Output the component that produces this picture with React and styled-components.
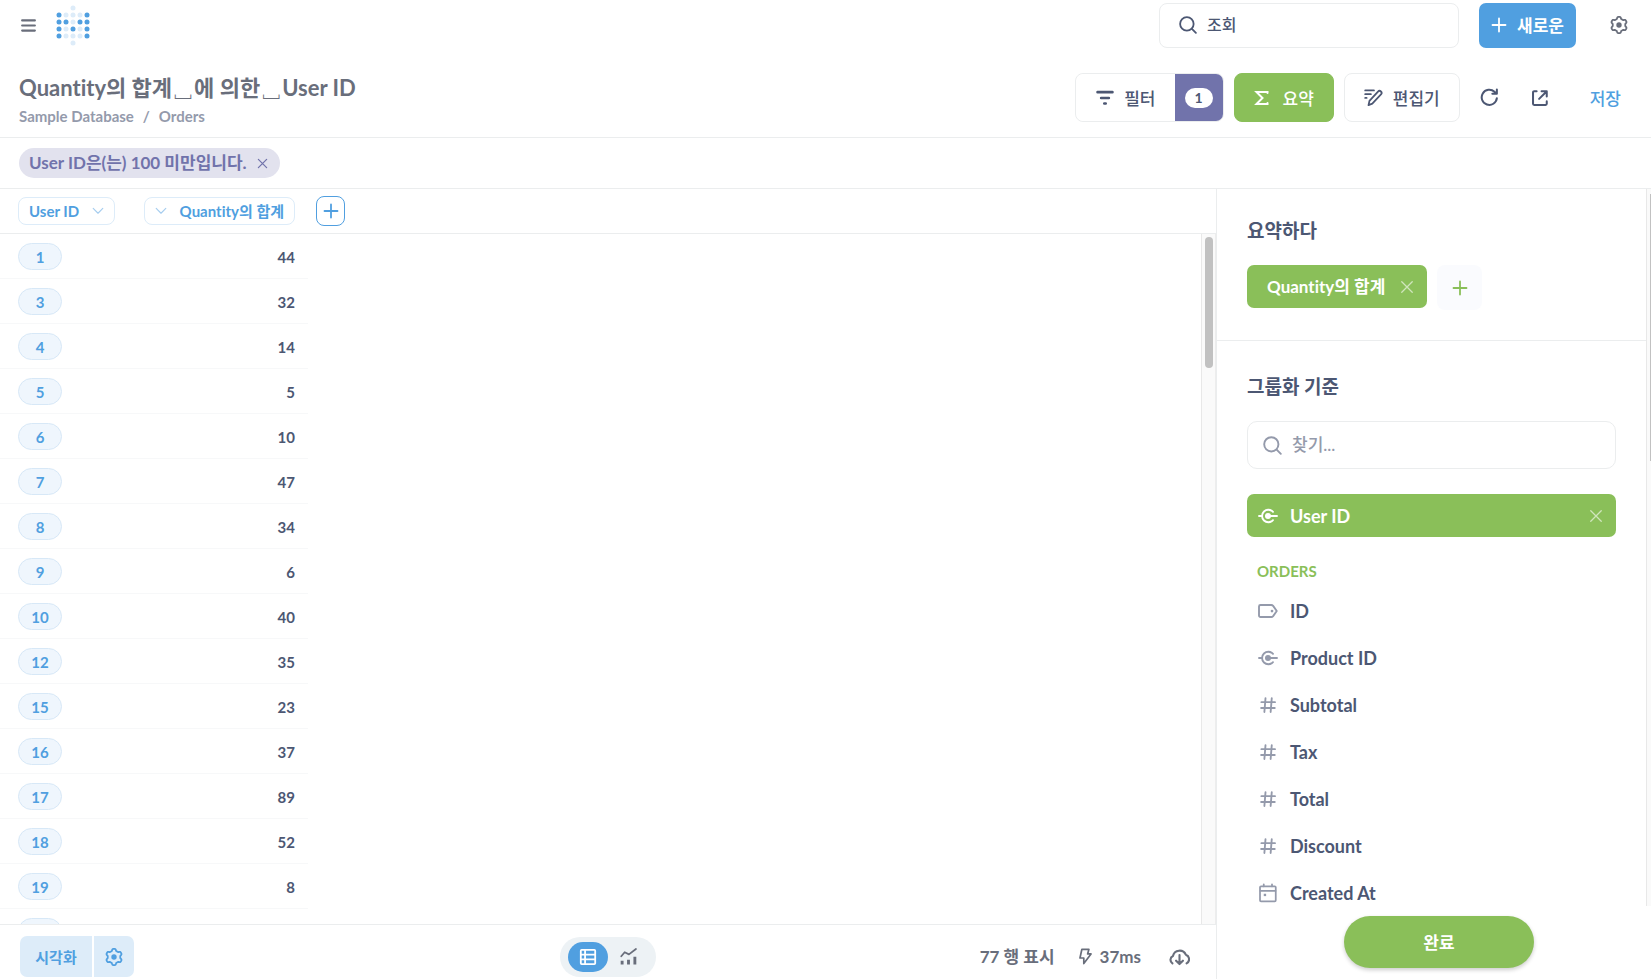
import React from "react";
import styled, { createGlobalStyle, ThemeProvider, css } from "styled-components";

const theme = {
  brand: "#509fe0",
  brandLight: "#ddecf9",
  summarize: "#8abf59",
  filter: "#7173ab",
  dark: "#4c5773",
  medium: "#696e7b",
  light: "#949aab",
  border: "#ebedee",
};

const GlobalStyle = createGlobalStyle`
  * { box-sizing: border-box; }
  body { margin: 0; font-variant-ligatures: none; }
  body, button, input {
    font-family: Lato, "Noto Sans CJK KR", sans-serif;
    font-weight: 700;
  }
  button {
    border: 0;
    margin: 0;
    padding: 0;
    background: none;
    color: inherit;
    font-variant-ligatures: none;
    cursor: pointer;
  }
  svg { display: block; flex: none; }
`;

/* ---------- icons ---------- */

const Line = ({ size = 18, width = 1.5, children }) => (
  <svg
    width={size}
    height={size}
    viewBox="0 0 16 16"
    fill="none"
    stroke="currentColor"
    strokeWidth={width}
    strokeLinecap="round"
    strokeLinejoin="round"
    aria-hidden="true"
  >
    {children}
  </svg>
);

const gearOutline = (() => {
  const points = [];
  for (let i = 0; i < 120; i += 1) {
    const a = (i / 120) * Math.PI * 2;
    const r = 6.4 - 0.85 * Math.tanh(2.2 * Math.cos(6 * a));
    points.push(`${(8 + r * Math.cos(a)).toFixed(2)} ${(8 + r * Math.sin(a)).toFixed(2)}`);
  }
  return `M${points.join("L")}Z`;
})();

const GearIcon = () => (
  <Line size={18} width={1.6}>
    <path d={gearOutline} />
    <circle cx="8" cy="8" r="2.4" fill="currentColor" stroke="none" />
  </Line>
);
const BurgerIcon = () => (
  <Line size={17} width={2}>
    <path d="M2 3.2h12M2 8h12M2 12.8h12" />
  </Line>
);
const SearchIcon = ({ size = 18 }) => (
  <Line size={size} width={1.6}>
    <circle cx="7" cy="7" r="6" />
    <path d="M11.5 11.5 15 15" />
  </Line>
);
const PlusIcon = ({ size = 16 }) => (
  <Line size={size} width={1.8}>
    <path d="M8 1.5v13M1.5 8h13" />
  </Line>
);
const CloseIcon = ({ size = 13, width = 1.5 }) => (
  <Line size={size} width={width}>
    <path d="m2 2 12 12M14 2 2 14" />
  </Line>
);
const ChevronIcon = () => (
  <Line size={12} width={1.5}>
    <path d="m1.6 4.6 6.4 6.4 6.4-6.4" />
  </Line>
);
const FilterIcon = () => (
  <Line size={18} width={2.4}>
    <path d="M1.4 2.8h13.2M4.6 8h6.8M7.4 12.9h1.2" />
  </Line>
);
const SumIcon = () => (
  <Line size={16} width={2}>
    <path d="M13.5 3V2H2.5l6 6-6 6h11v-1" strokeLinejoin="miter" />
  </Line>
);
const NotebookIcon = () => (
  <Line size={19} width={1.5}>
    <path d="M1 2h7.4M1 5.2h4.8M1 8.4h1.2" />
    <path d="m4.6 10.8 7.2-7.8a1.7 1.7 0 0 1 2.5 2.4L7 13.2l-3.2 1.2Z" />
  </Line>
);
const RefreshIcon = () => (
  <Line size={19} width={1.7}>
    <path d="M14.2 8.6a6.4 6.4 0 1 1-2-5.4l1.6 1.4M14.2 1.2v3.6h-3.8" />
  </Line>
);
const ShareIcon = () => (
  <Line size={18} width={1.8}>
    <path d="M5 2H2.8a1 1 0 0 0-1 1v10.2a1 1 0 0 0 1 1H13a1 1 0 0 0 1-1V11M9.4 2H14v4.6M13.6 2.4 7.2 8.8" />
  </Line>
);
const TableIcon = () => (
  <Line size={18} width={1.6}>
    <rect x="1.6" y="1.6" width="12.8" height="12.8" rx="0.8" />
    <path d="M2 5.9h12M2 10.1h12M5.4 2v12" />
  </Line>
);
const ChartIcon = () => (
  <Line size={17} width={1.7}>
    <path d="m1.2 7.8 3.2-3.8 4 2L15 1" />
    <path
      d="M2 15.600v-3.600M8 15.600v-4.600M14 15.600V8.200"
      strokeWidth="2.7"
      strokeLinecap="butt"
    />
  </Line>
);
const BoltIcon = () => (
  <Line size={17} width={1.6}>
    <path d="M4.6 1.2h6.6L10 5.6h3.2L6.4 14.6V9.4H2.8Z" />
  </Line>
);
const CloudIcon = () => (
  <Line size={21} width={1.6}>
    <path d="M2.6 13.2A3.2 3.2 0 0 1 3 7.6 5.2 5.2 0 0 1 12.8 6.6a3.6 3.6 0 0 1 .6 6.6M8 6.8v6.8M5.4 11.2 8 13.8l2.6-2.6" />
  </Line>
);
const KeyFieldIcon = () => (
  <Line size={20} width={1.5}>
    <path d="M.8 8h2.6M8 8h7.2" />
    <path d="M12 4.7a5 5 0 1 0 0 6.6" />
    <circle cx="8" cy="8" r="2.4" fill="currentColor" stroke="none" />
  </Line>
);
const LabelIcon = () => (
  <Line size={20} width={1.5}>
    <path d="M2 3.2h8.6a2 2 0 0 1 1.5.7L15 8l-2.9 4.1a2 2 0 0 1-1.5.7H2A1.2 1.2 0 0 1 .8 11.6V4.4A1.2 1.2 0 0 1 2 3.2Z" />
    <circle cx="11.2" cy="8" r="1.1" fill="currentColor" stroke="none" />
  </Line>
);
const HashIcon = () => (
  <Line size={20} width={1.5}>
    <path d="M6 2.6 5.1 13.6M11 2.6l-.9 11M2.7 5.7h10.9M2.5 10.4h10.9" />
  </Line>
);
const CalendarIcon = () => (
  <Line size={20} width={1.4}>
    <rect x="1.6" y="2.6" width="12.6" height="12" rx="0.8" />
    <path d="M2 6.2h12M4.6 1v1.6M11.2 1v1.6" />
    <rect x="4.6" y="8.6" width="1.9" height="1.9" fill="currentColor" stroke="none" />
  </Line>
);

const logoRows = ["..o..", "xooox", "xxoxx", "xoxox", "xooox", "..o.."];
const Logo = () => (
  <svg width="34" height="41" viewBox="0 0 34 41" role="img" aria-label="Metabase">
    {logoRows.flatMap((row, y) =>
      [...row].map((dot, x) =>
        dot === "." ? null : (
          <circle
            key={`${x}-${y}`}
            cx={3 + x * 7}
            cy={3 + y * 7}
            r="2.5"
            fill={dot === "x" ? theme.brand : theme.brandLight}
          />
        )
      )
    )}
  </svg>
);

/* ---------- page and header ---------- */

const Page = styled.div`
  display: flex;
  flex-direction: column;
  height: 100vh;
  overflow: hidden;
  background: #fff;
  color: ${(p) => p.theme.dark};
  font-size: 17px;
  line-height: 24px;
`;

const AppBar = styled.header`
  display: flex;
  align-items: center;
  height: 50px;
  padding: 0 23px 0 19px;
  color: ${(p) => p.theme.medium};
`;

const HomeLink = styled.a`
  margin: 0 auto 0 19px;
`;

const IconButton = styled.button`
  display: flex;
  align-items: center;
  justify-content: center;
  min-width: ${(p) => p.$width || 18}px;
`;

const SearchBox = styled.label`
  display: flex;
  align-items: center;
  gap: 10px;
  width: ${(p) => (p.$large ? "100%" : "300px")};
  height: ${(p) => (p.$large ? 48 : 45)}px;
  padding: 0 ${(p) => (p.$large ? 15 : 19)}px;
  border: 1px solid ${(p) => p.theme.border};
  border-radius: ${(p) => (p.$large ? 10 : 8)}px;
  color: ${(p) => (p.$large ? p.theme.light : p.theme.dark)};
`;

const SearchInput = styled.input`
  flex: 1;
  min-width: 0;
  padding: 0 0 2px;
  border: 0;
  outline: 0;
  background: none;
  font-size: ${(p) => p.$size}px;
  font-weight: 500;
  color: inherit;
  &::placeholder { color: inherit; opacity: 1; }
`;

const NewButton = styled.button`
  display: flex;
  align-items: center;
  gap: 10px;
  height: 45px;
  margin: 0 34px 0 20px;
  padding: 0 12px 1px;
  border-radius: 7px;
  background: ${(p) => p.theme.brand};
  color: #fff;
  font-size: 17px;
`;

const QuestionBar = styled.div`
  display: flex;
  align-items: center;
  justify-content: space-between;
  height: 88px;
  padding: 8px 30px 0 19px;
  border-bottom: 1px solid ${(p) => p.theme.border};
`;

const Title = styled.h1`
  margin: 5px 0 0;
  font-size: 22px;
  line-height: 32px;
  font-weight: 700;
  color: ${(p) => p.theme.medium};
`;

const Breadcrumbs = styled.nav`
  display: flex;
  gap: 9px;
  font-size: 15px;
  line-height: 24px;
  color: ${(p) => p.theme.light};
  a { color: inherit; text-decoration: none; }
`;

const Actions = styled.div`
  display: flex;
  align-items: center;
  gap: 10px;
`;

const ActionButton = styled.button`
  display: flex;
  align-items: center;
  gap: ${(p) => p.$gap || 10}px;
  height: 49px;
  padding: 0 19px;
  border: 1px solid ${(p) => (p.$filled ? p.theme.summarize : p.theme.border)};
  border-radius: 8px;
  background: ${(p) => (p.$filled ? p.theme.summarize : "#fff")};
  color: ${(p) => (p.$filled ? "#fff" : p.theme.dark)};
  font-size: 17px;
  font-weight: 500;
`;

const FilterGroup = styled.div`
  display: flex;
  height: 49px;
  border: 1px solid ${(p) => p.theme.border};
  border-radius: 8px;
  overflow: hidden;
  ${ActionButton} {
    height: 47px;
    padding-left: 20px;
    border: 0;
  }
`;

const FilterCount = styled.button`
  display: flex;
  align-items: center;
  justify-content: center;
  width: 48px;
  background: ${(p) => p.theme.filter};
  span {
    width: 28px;
    height: 20px;
    border-radius: 10px;
    background: #fff;
    font-size: 14px;
    line-height: 20px;
  }
`;

const SaveButton = styled.button`
  margin-left: 20px;
  color: ${(p) => p.theme.brand};
  font-size: 17px;
  font-weight: 500;
`;

const FilterBar = styled.div`
  display: flex;
  align-items: center;
  height: 51px;
  padding: 0 19px;
  border-bottom: 1px solid ${(p) => p.theme.border};
`;

const FilterPill = styled.span`
  display: flex;
  align-items: center;
  gap: 10px;
  height: 30px;
  padding: 0 11px 0 10px;
  border-radius: 15px;
  background: #e2e2ee;
  color: ${(p) => p.theme.filter};
  font-size: 17px;
`;

/* ---------- data table ---------- */

const Body = styled.div`
  display: flex;
  flex: 1;
  min-height: 0;
`;

const Results = styled.main`
  display: flex;
  flex-direction: column;
  flex: 1;
  min-width: 0;
`;

const TableArea = styled.div`
  position: relative;
  flex: 1;
  min-height: 0;
  overflow: hidden;
`;

const Table = styled.table`
  width: 100%;
  border-spacing: 0;
  table-layout: fixed;
  font-size: 15px;
  line-height: 20px;
  th, td {
    height: 45px;
    padding: 0;
    text-align: left;
  }
  th { border-bottom: 1px solid ${(p) => p.theme.border}; }
`;

const Col = styled.col`
  width: ${(p) => (p.$width ? `${p.$width}px` : "auto")};
`;

const Cell = styled.td`
  && {
    border-bottom: 1px solid #f7f8f9;
    vertical-align: top;
    ${(p) =>
      p.$numeric
        ? css`
            padding: 13px 13px 0 0;
            text-align: right;
          `
        : css`
            padding: 9px 0 0 18px;
          `}
  }
`;

const HeadCell = styled.th`
  && { padding-left: ${(p) => p.$indent}px; }
`;

const ColumnButton = styled.button`
  display: flex;
  align-items: center;
  justify-content: space-between;
  width: ${(p) => p.$width}px;
  height: 28px;
  padding: 0 10px;
  border: 1px solid ${(p) => p.theme.brandLight};
  border-radius: 8px;
  color: ${(p) => p.theme.brand};
  font-size: 15px;
  line-height: 20px;
  white-space: nowrap;
  svg { color: #a6cdef; }
`;

const AddColumn = styled.button`
  display: flex;
  align-items: center;
  justify-content: center;
  width: 29px;
  height: 30px;
  border: 1px solid ${(p) => p.theme.brand};
  border-radius: 8px;
  color: ${(p) => p.theme.brand};
`;

const IdPill = styled.a`
  display: block;
  width: 44px;
  height: 27px;
  border: 1px solid #d7e8f7;
  border-radius: 14px;
  background: #eff6fd;
  color: ${(p) => p.theme.brand};
  line-height: 27px;
  text-align: center;
  text-decoration: none;
`;

const Track = styled.div`
  position: absolute;
  top: 45px;
  right: 0;
  bottom: 0;
  width: 15px;
  padding: 3px 2px 3px 3px;
  border-left: 1px solid #e8e8e8;
  border-right: 1px solid #ededed;
  background: #fafafa;
`;

const Thumb = styled.div`
  height: ${(p) => p.$height}px;
  border-radius: 4px;
  background: #c1c1c1;
`;

const Footer = styled.footer`
  display: grid;
  grid-template-columns: 1fr auto 1fr;
  align-items: center;
  height: 55px;
  padding: 9px 20px 0;
  border-top: 1px solid ${(p) => p.theme.border};
  color: ${(p) => p.theme.medium};
`;

const VisualizeGroup = styled.div`
  display: flex;
  gap: 2px;
  border-radius: 7px;
  overflow: hidden;
  width: max-content;
  button {
    display: flex;
    align-items: center;
    justify-content: center;
    height: 41px;
    background: ${(p) => p.theme.brandLight};
    color: ${(p) => p.theme.brand};
    font-size: 15px;
  }
`;

const VisualizeButton = styled.button`
  width: ${(p) => p.$width}px;
`;

const Toggle = styled.div`
  display: flex;
  align-items: center;
  height: 40px;
  padding: 0 8px;
  border-radius: 20px;
  background: #edf2f5;
`;

const ToggleButton = styled.button`
  display: flex;
  align-items: center;
  justify-content: center;
  width: 40px;
  height: 30px;
  border-radius: 15px;
  ${(p) =>
    p.$active &&
    css`
      background: ${p.theme.brand};
      color: #fff;
    `}
`;

const Stats = styled.div`
  display: flex;
  align-items: center;
  justify-content: flex-end;
  gap: 22px;
  padding-right: 6px;
  span { display: flex; align-items: center; gap: 6px; }
  button { padding-left: 6px; }
`;

/* ---------- summarize sidebar ---------- */

const Sidebar = styled.aside`
  display: flex;
  flex-direction: column;
  width: 435px;
  border-left: 1px solid ${(p) => p.theme.border};
`;

const Scroller = styled.div`
  display: flex;
  flex: 1;
  min-height: 0;
  overflow: hidden;
`;

const Sections = styled.div`
  flex: 1;
  min-width: 0;
`;

const SideTrack = styled.div`
  width: 5px;
  padding: 5px 0 0 3px;
  border-left: 1px solid #e8e8e8;
  background: #fafafa;
  ${Thumb} { border-radius: 0; }
`;

const Section = styled.section`
  padding: 28px 30px 30px;
  & + & {
    padding-top: 32px;
    border-top: 1px solid ${(p) => p.theme.border};
  }
`;

const SectionTitle = styled.h2`
  margin: 0 0 20px;
  font-size: 19px;
  line-height: 28px;
`;

const Chips = styled.div`
  display: flex;
  gap: 10px;
`;

const Chip = styled.div`
  display: flex;
  align-items: center;
  justify-content: space-between;
  gap: 15px;
  height: 43px;
  padding: 0 13px 0 ${(p) => (p.$wide ? 11 : 20)}px;
  border-radius: 7px;
  background: ${(p) => p.theme.summarize};
  color: #fff;
  font-size: ${(p) => (p.$wide ? 18 : 17)}px;
  margin-top: ${(p) => (p.$wide ? 25 : 0)}px;
  button { opacity: 0.6; }
`;

const AddChip = styled.button`
  display: flex;
  align-items: center;
  justify-content: center;
  width: 45px;
  height: 45px;
  border-radius: 8px;
  background: #fafbfe;
  color: ${(p) => p.theme.summarize};
`;

const Field = styled.span`
  display: flex;
  align-items: center;
  gap: 12px;
`;

const GroupName = styled.h3`
  margin: 24px 10px 6px;
  color: ${(p) => p.theme.summarize};
  font-size: 15px;
  line-height: 20px;
`;

const FieldList = styled.ul`
  margin: 0;
  padding: 0;
  list-style: none;
`;

const FieldButton = styled.button`
  display: flex;
  align-items: center;
  width: 100%;
  height: 47px;
  gap: 12px;
  padding-left: 11px;
  font-size: 18px;
  line-height: 22px;
  svg { color: ${(p) => p.theme.light}; }
`;

const SidebarFooter = styled.div`
  display: flex;
  justify-content: center;
  padding: 10px 0 11px 10px;
`;

const DoneButton = styled.button`
  width: 190px;
  height: 52px;
  padding-bottom: 2px;
  border-radius: 26px;
  background: ${(p) => p.theme.summarize};
  box-shadow: 0 2px 4px rgba(0, 0, 0, 0.2);
  color: #fff;
  font-size: 17px;
`;

const rows = [
  [1, 44], [3, 32], [4, 14], [5, 5], [6, 10], [7, 47], [8, 34], [9, 6],
  [10, 40], [12, 35], [15, 23], [16, 37], [17, 89], [18, 52], [19, 8], ["", ""],
];

const fields = [
  ["ID", LabelIcon],
  ["Product ID", KeyFieldIcon],
  ["Subtotal", HashIcon],
  ["Tax", HashIcon],
  ["Total", HashIcon],
  ["Discount", HashIcon],
  ["Created At", CalendarIcon],
];

export default function App() {
  return (
    <ThemeProvider theme={theme}>
      <GlobalStyle />
      <Page>
        <AppBar>
          <IconButton aria-label="메뉴"><BurgerIcon /></IconButton>
          <HomeLink href="#home"><Logo /></HomeLink>
          <SearchBox>
            <SearchIcon />
            <SearchInput $size={16} aria-label="조회" placeholder="조회" />
          </SearchBox>
          <NewButton><PlusIcon />새로운</NewButton>
          <IconButton aria-label="설정"><GearIcon /></IconButton>
        </AppBar>

        <QuestionBar>
          <div>
            <Title>Quantity의 합계␣에 의한␣User ID</Title>
            <Breadcrumbs>
              <a href="#database">Sample Database</a>
              <span>/</span>
              <a href="#orders">Orders</a>
            </Breadcrumbs>
          </div>
          <Actions>
            <FilterGroup>
              <ActionButton><FilterIcon />필터</ActionButton>
              <FilterCount><span>1</span></FilterCount>
            </FilterGroup>
            <ActionButton $filled $gap={13}><SumIcon />요약</ActionButton>
            <ActionButton><NotebookIcon />편집기</ActionButton>
            <IconButton $width={40} aria-label="새로고침"><RefreshIcon /></IconButton>
            <IconButton $width={40} aria-label="공유"><ShareIcon /></IconButton>
            <SaveButton>저장</SaveButton>
          </Actions>
        </QuestionBar>

        <FilterBar>
          <FilterPill>
            User ID은(는) 100 미만입니다.
            <IconButton $width={12} aria-label="필터 제거"><CloseIcon size={11} width={1.8} /></IconButton>
          </FilterPill>
        </FilterBar>

        <Body>
          <Results>
            <TableArea>
              <Table>
                <colgroup>
                  <Col $width={129} />
                  <Col $width={179} />
                  <Col />
                </colgroup>
                <thead>
                  <tr>
                    <HeadCell $indent={18}>
                      <ColumnButton $width={97}>User ID<ChevronIcon /></ColumnButton>
                    </HeadCell>
                    <HeadCell $indent={15}>
                      <ColumnButton $width={151}><ChevronIcon />Quantity의 합계</ColumnButton>
                    </HeadCell>
                    <HeadCell $indent={8}>
                      <AddColumn aria-label="열 추가"><PlusIcon /></AddColumn>
                    </HeadCell>
                  </tr>
                </thead>
                <tbody>
                  {rows.map(([id, total]) => (
                    <tr key={id}>
                      <Cell><IdPill href={`#user-${id}`}>{id}</IdPill></Cell>
                      <Cell $numeric>{total}</Cell>
                      <td />
                    </tr>
                  ))}
                </tbody>
              </Table>
              <Track><Thumb $height={131} /></Track>
            </TableArea>
            <Footer>
              <VisualizeGroup>
                <VisualizeButton $width={72}>시각화</VisualizeButton>
                <VisualizeButton $width={40} aria-label="시각화 설정"><GearIcon /></VisualizeButton>
              </VisualizeGroup>
              <Toggle>
                <ToggleButton $active aria-label="표"><TableIcon /></ToggleButton>
                <ToggleButton aria-label="차트"><ChartIcon /></ToggleButton>
              </Toggle>
              <Stats>
                <span>77 행 표시</span>
                <span><BoltIcon />37ms</span>
                <IconButton aria-label="다운로드"><CloudIcon /></IconButton>
              </Stats>
            </Footer>
          </Results>

          <Sidebar>
            <Scroller>
              <Sections>
                <Section>
                  <SectionTitle>요약하다</SectionTitle>
                  <Chips>
                    <Chip>
                      Quantity의 합계
                      <button aria-label="제거"><CloseIcon size={14} /></button>
                    </Chip>
                    <AddChip aria-label="추가"><PlusIcon /></AddChip>
                  </Chips>
                </Section>
                <Section>
                  <SectionTitle>그룹화 기준</SectionTitle>
                  <SearchBox $large>
                    <SearchIcon size={19} />
                    <SearchInput $size={17} aria-label="찾기" placeholder="찾기..." />
                  </SearchBox>
                  <Chip $wide>
                    <Field><KeyFieldIcon />User ID</Field>
                    <button aria-label="제거"><CloseIcon size={14} /></button>
                  </Chip>
                  <GroupName>ORDERS</GroupName>
                  <FieldList>
                    {fields.map(([name, Icon]) => (
                      <li key={name}>
                        <FieldButton><Icon />{name}</FieldButton>
                      </li>
                    ))}
                  </FieldList>
                </Section>
              </Sections>
              <SideTrack><Thumb $height={267} /></SideTrack>
            </Scroller>
            <SidebarFooter><DoneButton>완료</DoneButton></SidebarFooter>
          </Sidebar>
        </Body>
      </Page>
    </ThemeProvider>
  );
}
